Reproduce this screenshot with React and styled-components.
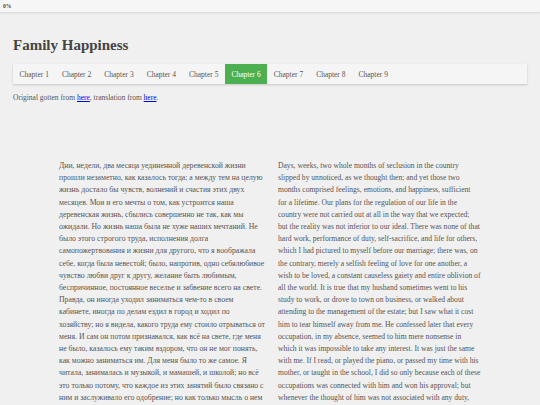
import React from 'react';
import styled, { createGlobalStyle } from 'styled-components';

const GlobalStyle = createGlobalStyle`
  body {
    margin: 0;
    background: #f0f0f0;
    font-family: 'Liberation Serif', 'Times New Roman', serif;
    color: #555;
  }
`;

const ProgressBar = styled.div`
  height: 12px;
  background: #f6f6f6;
  box-shadow: 0 1px 2px rgba(0, 0, 0, 0.12);
  display: flex;
  align-items: center;
  padding-left: 3px;
  font-size: 5.5px;
  font-weight: bold;
  color: #444;
`;

const Header = styled.div`
  padding: 0 13px;
`;

const Title = styled.h1`
  margin: 22px 0 0;
  font-size: 15px;
  line-height: 22px;
  color: #444;
`;

const Nav = styled.nav`
  margin-top: 8px;
  display: flex;
  height: 20px;
  background: #f5f5f5;
  box-shadow: 0 1px 2px rgba(0, 0, 0, 0.18);
`;

const Tab = styled.div`
  display: flex;
  align-items: center;
  padding: 0 6.5px;
  font-size: 7.5px;
  color: ${(p) => (p.$active ? '#fff' : '#555')};
  background: ${(p) => (p.$active ? '#4caf50' : 'transparent')};
`;

const Source = styled.p`
  margin: 9px 0 0;
  font-size: 7.5px;
  line-height: 10px;
  color: #555;
  a {
    color: #00e;
  }
`;

const Columns = styled.div`
  margin: 57px 0 0 59px;
  display: grid;
  grid-template-columns: 203px 204px;
  column-gap: 16px;
`;

const Text = styled.div`
  font-size: ${(p) => p.$size}px;
  line-height: 12.2px;
  color: #555;
`;

const Line = styled.span`
  display: block;
  white-space: nowrap;
`;

const ru = [
  'Дни, недели, два месяца уединенной деревенской жизни',
  'прошли незаметно, как казалось тогда; а между тем на целую',
  'жизнь достало бы чувств, волнений и счастия этих двух',
  'месяцев. Мои и его мечты о том, как устроится наша',
  'деревенская жизнь, сбылись совершенно не так, как мы',
  'ожидали. Но жизнь наша была не хуже наших мечтаний. Не',
  'было этого строгого труда, исполнения долга',
  'самопожертвования и жизни для другого, что я воображала',
  'себе, когда была невестой; было, напротив, одно себялюбивое',
  'чувство любви друг к другу, желание быть любимым,',
  'беспричинное, постоянное веселье и забвение всего на свете.',
  'Правда, он иногда уходил заниматься чем-то в своем',
  'кабинете, иногда по делам ездил в город и ходил по',
  'хозяйству; но я видела, какого труда ему стоило отрываться от',
  'меня. И сам он потом признавался, как всё на свете, где меня',
  'не было, казалось ему таким вздором, что он не мог понять,',
  'как можно заниматься им. Для меня было то же самое. Я',
  'читала, занималась и музыкой, и мамашей, и школой; но всё',
  'это только потому, что каждое из этих занятий было связано с',
  'ним и заслуживало его одобрение; но как только мысль о нем',
  'не примешивалась к какому-нибудь делу, руки у меня',
  'опускались, и мне так забавно казалось подумать, что есть',
  'что-нибудь, кроме его.',
];

const en = [
  'Days, weeks, two whole months of seclusion in the country',
  'slipped by unnoticed, as we thought then; and yet those two',
  'months comprised feelings, emotions, and happiness, sufficient',
  'for a lifetime. Our plans for the regulation of our life in the',
  'country were not carried out at all in the way that we expected;',
  'but the reality was not inferior to our ideal. There was none of that',
  'hard work, performance of duty, self-sacrifice, and life for others,',
  'which I had pictured to myself before our marriage; there was, on',
  'the contrary, merely a selfish feeling of love for one another, a',
  'wish to be loved, a constant causeless gaiety and entire oblivion of',
  'all the world. It is true that my husband sometimes went to his',
  'study to work, or drove to town on business, or walked about',
  'attending to the management of the estate; but I saw what it cost',
  'him to tear himself away from me. He confessed later that every',
  'occupation, in my absence, seemed to him mere nonsense in',
  'which it was impossible to take any interest. It was just the same',
  'with me. If I read, or played the piano, or passed my time with his',
  'mother, or taught in the school, I did so only because each of these',
  'occupations was connected with him and won his approval; but',
  'whenever the thought of him was not associated with any duty,',
  'my hands fell to my side and it seemed so absurd to think that',
  'anything existed except him.',
];

const chapters = [1, 2, 3, 4, 5, 6, 7, 8, 9];

export default function App() {
  return (
    <>
      <GlobalStyle />
      <ProgressBar>0%</ProgressBar>
      <Header>
        <Title>Family Happiness</Title>
        <Nav>
          {chapters.map((n) => (
            <Tab key={n} $active={n === 6}>
              Chapter {n}
            </Tab>
          ))}
        </Nav>
        <Source>
          Original gotten from <a href="#">here</a>, translation from <a href="#">here</a>.
        </Source>
      </Header>
      <Columns>
        <Text $size={7.75}>
          {ru.map((l, i) => <Line key={i}>{l}</Line>)}
        </Text>
        <Text $size={7.6}>
          {en.map((l, i) => <Line key={i}>{l}</Line>)}
        </Text>
      </Columns>
    </>
  );
}
